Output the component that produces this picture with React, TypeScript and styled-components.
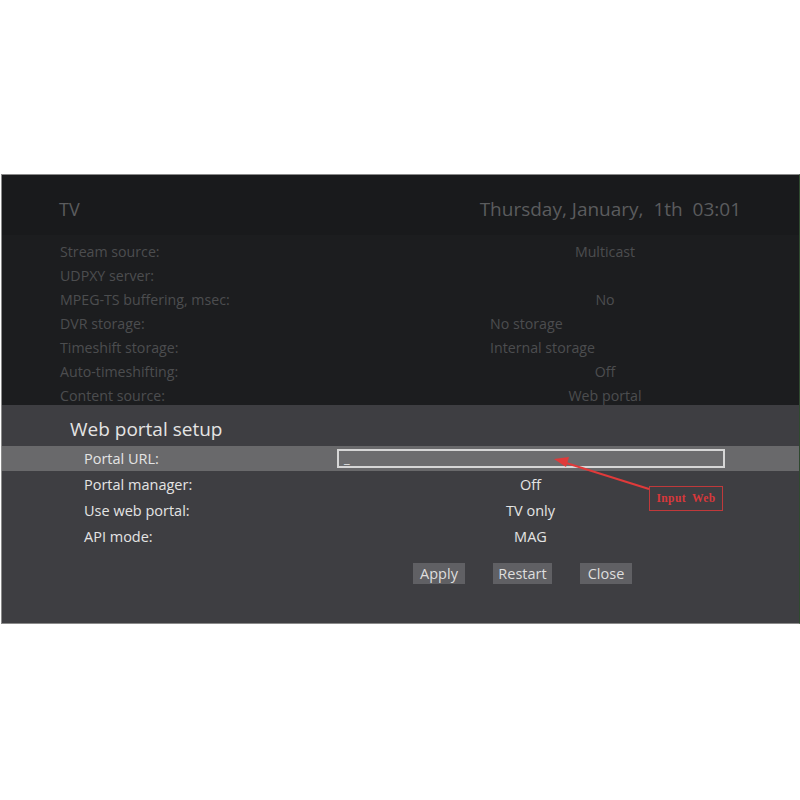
import React from "react";
import styled, { createGlobalStyle } from "styled-components";

const GlobalStyle = createGlobalStyle`
  body {
    margin: 0;
    background: #ffffff;
    font-family: "Open Sans", "Noto Sans", sans-serif;
  }
`;

const Page = styled.div`
  width: 800px;
  height: 800px;
  padding-top: 174px;
  box-sizing: border-box;
`;

const Screen = styled.div`
  position: relative;
  width: 797px;
  margin-left: 1px;
  border-top: 1px solid #8a8a8a;
  border-left: 1px solid #8a8a8a;
  border-right: 1px solid #2f4a2f;
  border-bottom: 1px solid #8a8a8a;
  background: #1c1d1f;
`;

const Header = styled.div`
  height: 60px;
  padding: 22px 58px 0 57px;
  box-sizing: border-box;
  display: flex;
  justify-content: space-between;
  background: #191a1c;
  color: #5b5c5e;
`;

const HeaderTitle = styled.div`
  font-size: 18px;
  line-height: 24px;
`;

const Clock = styled.div`
  font-size: 19px;
  line-height: 24px;
  white-space: pre;
`;

const List = styled.div`
  height: 170px;
  padding-top: 4px;
  box-sizing: border-box;
  overflow: hidden;
`;

const ListRow = styled.div`
  display: flex;
  height: 24px;
  align-items: center;
  padding-left: 58px;
  font-size: 14.2px;
  color: #4c4d4f;
`;

const ListLabel = styled.div`
  width: 430px;
`;

const ListValue = styled.div<{ $align: "left" | "center" }>`
  width: 230px;
  text-align: ${(p) => p.$align};
`;

const Dialog = styled.div`
  position: relative;
  height: 218px;
  padding-top: 12px;
  box-sizing: border-box;
  background: #3e3e42;
  color: #e4e4e4;
`;

const DialogTitle = styled.div`
  padding-left: 68px;
  font-size: 19px;
  line-height: 24px;
  margin-bottom: 5px;
`;

const Row = styled.div<{ $active?: boolean }>`
  display: flex;
  align-items: center;
  height: ${(p) => (p.$active ? "25px" : "26px")};
  padding-left: 82px;
  font-size: 14.5px;
  background: ${(p) => (p.$active ? "#69696b" : "transparent")};
`;

const RowLabel = styled.div`
  width: 253px;
`;

const RowValue = styled.div`
  width: 387px;
  text-align: center;
`;

const UrlInput = styled.div`
  width: 388px;
  height: 19px;
  box-sizing: border-box;
  border: 2px solid #d6d6d6;
  background: #6c6c6e;
  padding-left: 5px;
  font-size: 13px;
  line-height: 14px;
  color: #e8e8e8;
`;

const Buttons = styled.div`
  display: flex;
  gap: 28px;
  margin-top: 14px;
  padding-left: 411px;
`;

const Button = styled.div<{ $width: number }>`
  width: ${(p) => p.$width}px;
  height: 21px;
  background: #606064;
  color: #dedede;
  font-size: 14.5px;
  line-height: 21px;
  text-align: center;
`;

const Note = styled.div`
  position: absolute;
  left: 647px;
  top: 81px;
  width: 74px;
  height: 25px;
  box-sizing: border-box;
  border: 1px solid #c0393b;
  color: #d8383b;
  font-family: "Liberation Serif", serif;
  font-weight: bold;
  font-size: 11.5px;
  line-height: 23px;
  text-align: center;
  letter-spacing: 0.4px;
  word-spacing: 3px;
`;

const Arrow = styled.svg`
  position: absolute;
  left: 0;
  top: 0;
  pointer-events: none;
`;

const settings: { label: string; value: string; align: "left" | "center" }[] = [
  { label: "Stream source:", value: "Multicast", align: "center" },
  { label: "UDPXY server:", value: "", align: "center" },
  { label: "MPEG-TS buffering, msec:", value: "No", align: "center" },
  { label: "DVR storage:", value: "No storage", align: "left" },
  { label: "Timeshift storage:", value: "Internal storage", align: "left" },
  { label: "Auto-timeshifting:", value: "Off", align: "center" },
  { label: "Content source:", value: "Web portal", align: "center" },
];

const portal = [
  { label: "Portal manager:", value: "Off" },
  { label: "Use web portal:", value: "TV only" },
  { label: "API mode:", value: "MAG" },
];

export default function App() {
  return (
    <Page>
      <GlobalStyle />
      <Screen>
        <Header>
          <HeaderTitle>TV</HeaderTitle>
          <Clock>{"Thursday, January,  1th  03:01"}</Clock>
        </Header>
        <List>
          {settings.map((s) => (
            <ListRow key={s.label}>
              <ListLabel>{s.label}</ListLabel>
              <ListValue $align={s.align}>{s.value}</ListValue>
            </ListRow>
          ))}
        </List>
        <Dialog>
          <DialogTitle>Web portal setup</DialogTitle>
          <Row $active>
            <RowLabel>Portal URL:</RowLabel>
            <UrlInput>_</UrlInput>
          </Row>
          {portal.map((p) => (
            <Row key={p.label}>
              <RowLabel>{p.label}</RowLabel>
              <RowValue>{p.value}</RowValue>
            </Row>
          ))}
          <Buttons>
            <Button $width={52}>Apply</Button>
            <Button $width={59}>Restart</Button>
            <Button $width={52}>Close</Button>
          </Buttons>
          <Arrow width="800" height="218" viewBox="0 0 800 218">
            <line x1="647" y1="84" x2="561" y2="57" stroke="#e03a3a" strokeWidth="2" />
            <polygon points="552,54 567,52 564,62" fill="#e03a3a" />
          </Arrow>
          <Note>Input Web</Note>
        </Dialog>
      </Screen>
    </Page>
  );
}
